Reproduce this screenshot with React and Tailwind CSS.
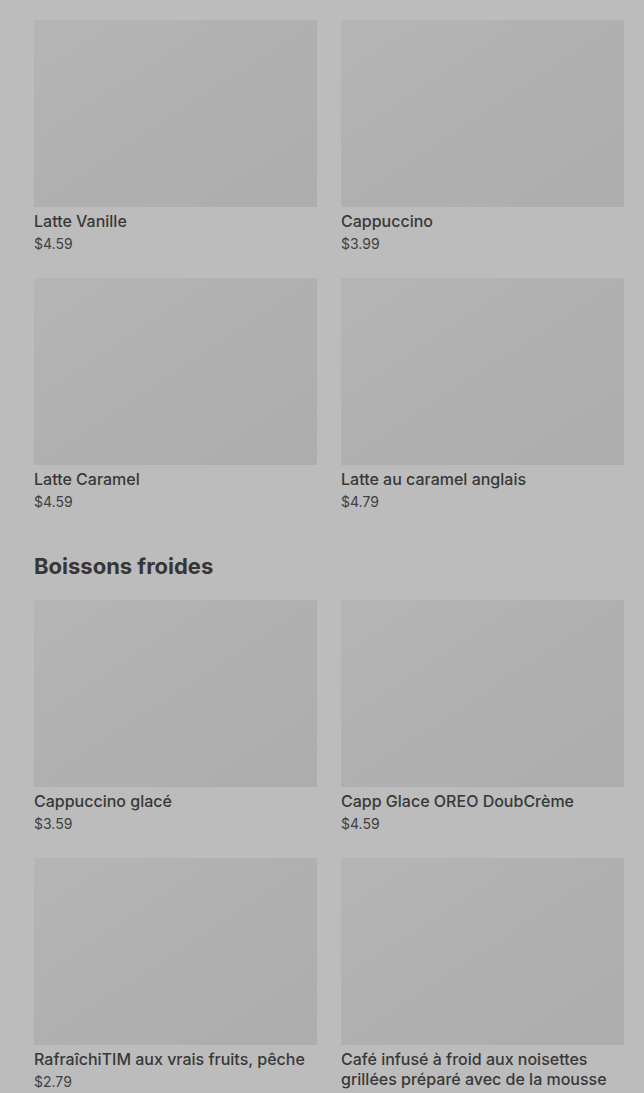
const hot = [
  { name: 'Latte Vanille', price: '$4.59' },
  { name: 'Cappuccino', price: '$3.99' },
  { name: 'Latte Caramel', price: '$4.59' },
  { name: 'Latte au caramel anglais', price: '$4.79' },
];

const cold = [
  { name: 'Cappuccino glacé', price: '$3.59' },
  { name: 'Capp Glace OREO DoubCrème', price: '$4.59' },
  { name: 'RafraîchiTIM aux vrais fruits, pêche', price: '$2.79' },
  { name: 'Café infusé à froid aux noisettes grillées préparé avec de la mousse', price: '' },
];

function Item({ name, price }) {
  return (
    <div className="flex flex-col">
      <div className="h-[187px] w-full bg-gradient-to-br from-[#b5b5b5] via-[#b0b0b0] to-[#adadad]" />
      <div className="mt-1 text-[16px] leading-5 font-medium text-[#383838]">{name}</div>
      {price && <div className="mt-[3px] text-[14px] leading-5 text-[#404040]">{price}</div>}
    </div>
  );
}

function Grid({ items }) {
  return (
    <div className="grid grid-cols-2 gap-x-6 gap-y-6">
      {items.map((item) => (
        <Item key={item.name} {...item} />
      ))}
    </div>
  );
}

export default function App() {
  return (
    <div className="h-[1093px] overflow-hidden bg-[#bcbcbc] pt-5 pl-[34px] pr-5 font-['Inter',sans-serif]">
      <Grid items={hot} />
      <h2 className="mt-10 mb-5 text-[22px] leading-7 font-bold text-[#363636]">
        Boissons froides
      </h2>
      <Grid items={cold} />
    </div>
  );
}
